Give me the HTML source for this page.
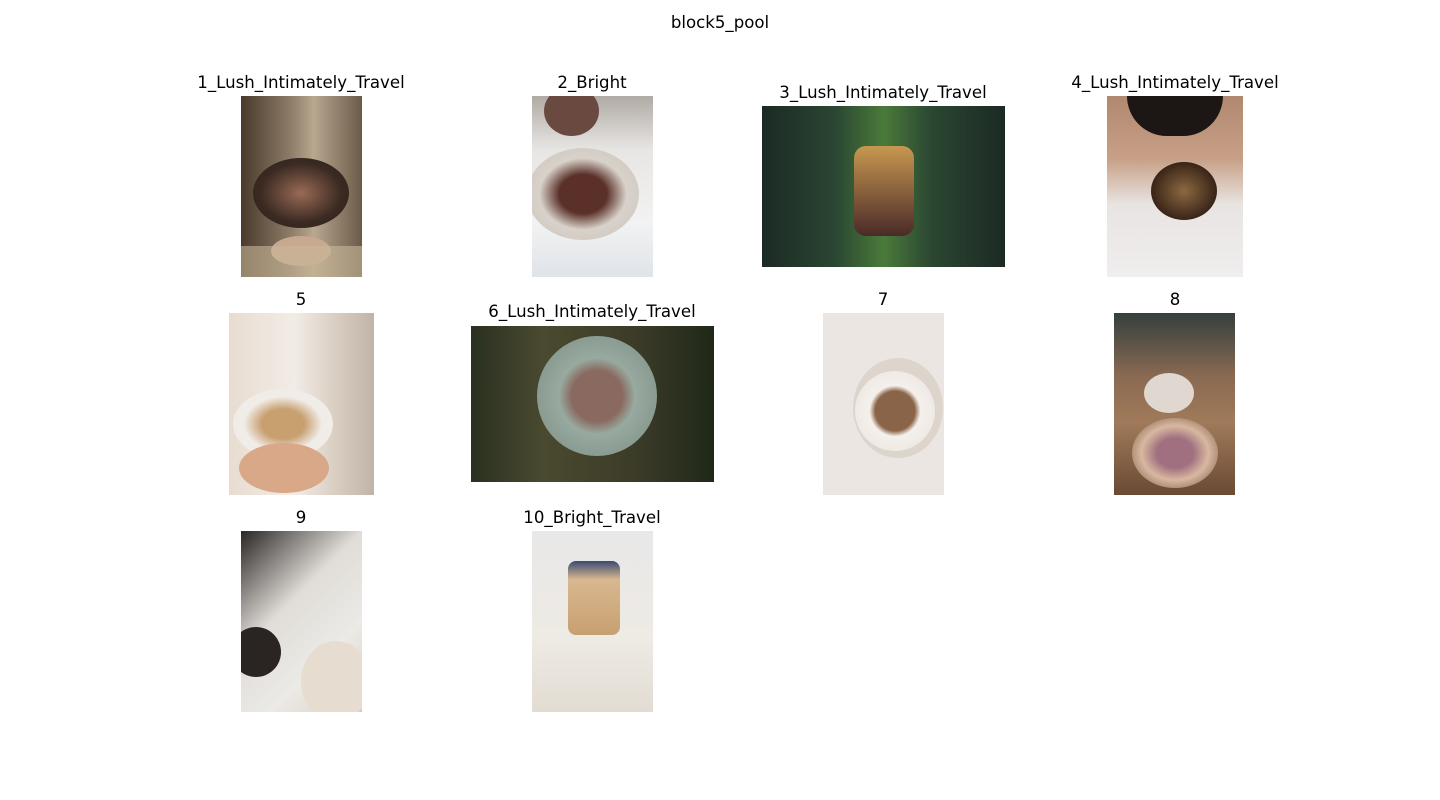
<!DOCTYPE html>
<html><head><meta charset="utf-8"><style>
html,body{margin:0;padding:0;background:#fff;width:1440px;height:800px;overflow:hidden;position:relative;font-family:"DejaVu Sans","Liberation Sans",sans-serif;color:#000}
.t{position:absolute;font-size:16.6px;line-height:16px;white-space:nowrap;transform:translateX(-50%)}
.i{position:absolute;overflow:hidden}
.i div{position:absolute;border-radius:50%}
</style></head><body>
<div class="t" style="left:720px;top:15px;font-size:16.6px">block5_pool</div>

<div class="t" style="left:301px;top:75px">1_Lush_Intimately_Travel</div>
<div class="i" style="left:241px;top:96px;width:121px;height:181px;background:linear-gradient(90deg,#4a3a2c 0%,#8a7a66 40%,#b8a890 60%,#6a5a48 100%)">
<div style="left:12px;top:62px;width:96px;height:70px;background:radial-gradient(#9a6a55,#3a2a22 60%,#2a1e18)"></div>
<div style="left:30px;top:140px;width:60px;height:30px;background:#c8a890"></div>
<div style="left:0;top:150px;width:121px;height:40px;border-radius:0;background:#c8b898;opacity:.6"></div></div>

<div class="t" style="left:592px;top:75px">2_Bright</div>
<div class="i" style="left:532px;top:96px;width:121px;height:181px;background:linear-gradient(180deg,#b0aaa4 0%,#e8e6e4 30%,#f2f2f2 70%,#dfe4ea 100%)">
<div style="left:12px;top:-10px;width:55px;height:50px;background:#6a4a40"></div>
<div style="left:-5px;top:52px;width:112px;height:92px;background:radial-gradient(#5a3028 30%,#d8d2ca 55%,#c8c2ba)"></div></div>

<div class="t" style="left:883px;top:85px">3_Lush_Intimately_Travel</div>
<div class="i" style="left:762px;top:106px;width:243px;height:161px;background:linear-gradient(90deg,#1c2a24 0%,#2a4632 30%,#4a7a3a 50%,#2a4632 70%,#1c2a24 100%)">
<div style="left:92px;top:40px;width:60px;height:90px;border-radius:12px;background:linear-gradient(#c89850,#4a2a28)"></div></div>

<div class="t" style="left:1175px;top:75px">4_Lush_Intimately_Travel</div>
<div class="i" style="left:1107px;top:96px;width:136px;height:181px;background:linear-gradient(180deg,#b08870 0%,#c8a088 35%,#e8e4e2 60%,#f0eeee 100%)">
<div style="left:20px;top:0;width:96px;height:40px;border-radius:0 0 40px 40px;background:#1c1614"></div>
<div style="left:44px;top:66px;width:66px;height:58px;background:radial-gradient(#8a6a40,#3a2418 70%)"></div></div>

<div class="t" style="left:301px;top:292px">5</div>
<div class="i" style="left:229px;top:313px;width:145px;height:182px;background:linear-gradient(90deg,#e8dcd0 0%,#f2ece6 45%,#d8ccc0 75%,#c0b4a8 100%)">
<div style="left:4px;top:76px;width:100px;height:70px;background:radial-gradient(#c8a070 30%,#f0ece8 55%)"></div>
<div style="left:10px;top:130px;width:90px;height:50px;background:#d8a888"></div></div>

<div class="t" style="left:592px;top:304px">6_Lush_Intimately_Travel</div>
<div class="i" style="left:471px;top:326px;width:243px;height:156px;background:linear-gradient(90deg,#2a3020 0%,#4a4a30 30%,#3a3a28 70%,#202818 100%)">
<div style="left:66px;top:10px;width:120px;height:120px;background:radial-gradient(#8a6a60 30%,#98aaa0 45%,#7a8a80)"></div></div>

<div class="t" style="left:883px;top:292px">7</div>
<div class="i" style="left:823px;top:313px;width:121px;height:182px;background:#ebe6e2">
<div style="left:30px;top:45px;width:90px;height:100px;background:#ddd4cc"></div>
<div style="left:32px;top:58px;width:80px;height:80px;background:radial-gradient(#8a6448 35%,#f4f0ec 45%,#e8e2dc)"></div></div>

<div class="t" style="left:1175px;top:292px">8</div>
<div class="i" style="left:1114px;top:313px;width:121px;height:182px;background:linear-gradient(180deg,#34403c 0%,#8a6a52 35%,#a07a5a 60%,#6a4a34 100%)">
<div style="left:30px;top:60px;width:50px;height:40px;background:#e0d8d0"></div>
<div style="left:18px;top:105px;width:86px;height:70px;background:radial-gradient(#a07080 30%,#d8b8a0 55%,#6a4a30)"></div></div>

<div class="t" style="left:301px;top:510px">9</div>
<div class="i" style="left:241px;top:531px;width:121px;height:181px;background:linear-gradient(135deg,#2a2624 0%,#e0ddd8 40%,#eceae6 70%,#d8ccc0 100%)">
<div style="left:-10px;top:96px;width:50px;height:50px;background:#2a2422"></div>
<div style="left:60px;top:110px;width:70px;height:80px;background:#e6dcd0"></div></div>

<div class="t" style="left:592px;top:510px">10_Bright_Travel</div>
<div class="i" style="left:532px;top:531px;width:121px;height:181px;background:linear-gradient(180deg,#e8e8e8 0%,#eeeae4 60%,#e2dcd2 100%)">
<div style="left:36px;top:30px;width:52px;height:74px;border-radius:8px;background:linear-gradient(#3a4a70 0%,#d8b890 25%,#c8a070 100%)"></div></div>
</body></html>
